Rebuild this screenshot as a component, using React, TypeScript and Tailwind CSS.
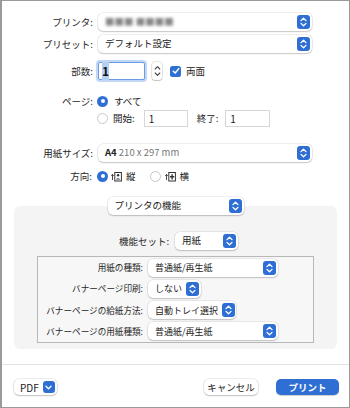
import React from "react"

const FONT = { fontFamily: '"Noto Sans CJK JP", "Noto Sans", sans-serif' }

function Stepper() {
  return (
    <span className="flex h-[14px] w-[13px] shrink-0 items-center justify-center rounded-[3px] bg-[#2f6fd4]">
      <svg width="7" height="10" viewBox="0 0 7 10" fill="none" stroke="white" strokeWidth="1.3" strokeLinecap="round" strokeLinejoin="round">
        <path d="M1 3.6 L3.5 1.2 L6 3.6" />
        <path d="M1 6.4 L3.5 8.8 L6 6.4" />
      </svg>
    </span>
  )
}

function Popup({ children, className = "", text = "text-[9.5px]" }: { children: React.ReactNode; className?: string; text?: string }) {
  return (
    <div
      className={`flex h-[18px] items-center justify-between gap-[4px] rounded-[5px] bg-white pl-[7px] pr-[2px] text-[#222] shadow-[0_0_0_0.5px_rgba(0,0,0,0.12),0_1px_1.5px_rgba(0,0,0,0.18)] ${text} ${className}`}
    >
      <span className="whitespace-nowrap leading-none">{children}</span>
      <Stepper />
    </div>
  )
}

function Radio({ on }: { on?: boolean }) {
  return on ? (
    <span className="flex h-[11px] w-[11px] shrink-0 items-center justify-center rounded-full bg-[#2f6fd4]">
      <span className="h-[4px] w-[4px] rounded-full bg-white" />
    </span>
  ) : (
    <span className="h-[11px] w-[11px] shrink-0 rounded-full border border-[#c8c8c8] bg-white" />
  )
}

function Field({ value, className = "" }: { value: string; className?: string }) {
  return (
    <div className={`flex h-[17px] items-center border border-[#d6d6d6] bg-white px-[4px] text-[10px] text-[#222] ${className}`}>
      {value}
    </div>
  )
}

function OrientIcon({ land }: { land?: boolean }) {
  return (
    <svg width="11" height="11" viewBox="0 0 11 11" fill="none" stroke="#333" strokeWidth="1">
      <path d="M1.5 9 V3.5 M0.3 4.8 L1.5 3.3 L2.7 4.8" strokeWidth="0.9" />
      <rect x="3.8" y="1.5" width="6.6" height="8.5" />
      {land ? (
        <path d="M5 5.8 H9.2 M7.1 3.2 V8.4" strokeWidth="1.4" />
      ) : (
        <>
          <circle cx="7.1" cy="4.3" r="1.2" fill="#333" stroke="none" />
          <path d="M5 8.6 Q7.1 5.8 9.2 8.6 Z" fill="#333" stroke="none" />
        </>
      )}
    </svg>
  )
}

function Label({ children }: { children: React.ReactNode }) {
  return <div className="w-[91px] shrink-0 whitespace-nowrap text-right text-[9.5px] text-[#262626]">{children}</div>
}

function InnerRow({ label, value, w }: { label: string; value: string; w: string }) {
  return (
    <div className="flex h-[22px] items-center">
      <div className="w-[105px] shrink-0 whitespace-nowrap text-right text-[8.6px] text-[#262626]">{label}</div>
      <Popup className={`ml-[5px] ${w}`} text="text-[9px]">{value}</Popup>
    </div>
  )
}

export default function App() {
  return (
    <div
      style={FONT}
      className="flex h-[408px] w-[350px] flex-col border-t border-r border-b border-l-2 border-[#9a9a9a] bg-white"
    >
      {/* top form */}
      <div className="flex flex-col pt-[12px]">
        <div className="flex h-[18px] items-center gap-[5px]">
          <Label>プリンタ:</Label>
          <Popup className="w-[214px]">
            <span className="text-[#888] blur-[1.6px]">■■■ ■■■■</span>
          </Popup>
        </div>
        <div className="mt-[4px] flex h-[18px] items-center gap-[5px]">
          <Label>プリセット:</Label>
          <Popup className="w-[214px]">デフォルト設定</Popup>
        </div>
        <div className="mt-[9px] flex h-[18px] items-center gap-[5px]">
          <Label>部数:</Label>
          <div className="flex h-[18px] w-[47px] items-center rounded-[2px] border border-[#6b9be0] bg-white px-[3px] text-[12px] font-semibold text-[#111] shadow-[0_0_0_2px_rgba(80,140,230,0.35)]">
            <span className="bg-[#b5d0f5]">1</span>
          </div>
          <div className="ml-[2px] flex h-[18px] w-[10px] flex-col items-center justify-center rounded-[3px] bg-white shadow-[0_0_0_0.5px_rgba(0,0,0,0.2),0_1px_1px_rgba(0,0,0,0.15)]">
            <svg width="7" height="12" viewBox="0 0 7 12" fill="none" stroke="#444" strokeWidth="1.1" strokeLinecap="round" strokeLinejoin="round">
              <path d="M1.2 4 L3.5 1.7 L5.8 4" />
              <path d="M1.2 8 L3.5 10.3 L5.8 8" />
            </svg>
          </div>
          <span className="ml-[3px] flex h-[11px] w-[11px] items-center justify-center rounded-[2.5px] bg-[#2f6fd4]">
            <svg width="8" height="8" viewBox="0 0 8 8" fill="none" stroke="white" strokeWidth="1.5" strokeLinecap="round" strokeLinejoin="round">
              <path d="M1.3 4.2 L3.2 6 L6.8 1.6" />
            </svg>
          </span>
          <span className="text-[9.5px] text-[#222]">両面</span>
        </div>

        <div className="mt-[13px] flex h-[16px] items-center gap-[4px]">
          <Label>ページ:</Label>
          <Radio on />
          <span className="ml-[2px] text-[9.5px] text-[#222]">すべて</span>
        </div>
        <div className="mt-[1px] flex h-[17px] items-center">
          <div className="w-[95px] shrink-0" />
          <Radio />
          <span className="ml-[5px] text-[9.5px] text-[#222]">開始:</span>
          <Field value="1" className="ml-[9px] w-[44px]" />
          <span className="ml-[9px] text-[9.5px] text-[#222]">終了:</span>
          <Field value="1" className="ml-[7px] w-[45px]" />
        </div>

        <div className="mt-[17px] flex h-[18px] items-center gap-[5px]">
          <Label>用紙サイズ:</Label>
          <Popup className="w-[214px]">
            <span className="font-semibold text-[#222]">A4</span>
            <span className="text-[#777]"> 210 x 297 mm</span>
          </Popup>
        </div>
        <div className="mt-[6px] flex h-[16px] items-center">
          <div className="w-[95px] shrink-0 pr-[5px] text-right text-[9.5px] text-[#262626]">方向:</div>
          <Radio on />
          <span className="ml-[3px] flex"><OrientIcon /></span>
          <span className="ml-[4px] text-[9.5px] text-[#222]">縦</span>
          <span className="ml-[14px] flex"><Radio /></span>
          <span className="ml-[4px] flex"><OrientIcon land /></span>
          <span className="ml-[4px] text-[9.5px] text-[#222]">横</span>
        </div>
      </div>

      {/* printer features */}
      <div className="mt-[13px] flex justify-center">
        <Popup className="relative z-10 w-[136px]">プリンタの機能</Popup>
      </div>
      <div className="mx-[12px] -mt-[9px] flex h-[143px] flex-col rounded-[6px] bg-[#f4f4f4] pt-[26px]">
        <div className="flex h-[18px] items-center justify-center gap-[6px] pl-[6px]">
          <span className="text-[9.5px] text-[#262626]">機能セット:</span>
          <Popup className="w-[63px]">用紙</Popup>
        </div>
        <div className="mx-[23px] mt-[6px] flex h-[87px] flex-col justify-center border border-[#b8b8b8] bg-[#f7f7f7]">
          <InnerRow label="用紙の種類:" value="普通紙/再生紙" w="w-[130px]" />
          <InnerRow label="バナーページ印刷:" value="しない" w="w-[53px]" />
          <InnerRow label="バナーページの給紙方法:" value="自動トレイ選択" w="w-[88px]" />
          <InnerRow label="バナーページの用紙種類:" value="普通紙/再生紙" w="w-[130px]" />
        </div>
      </div>

      {/* footer */}
      <div className="mt-[15px] h-px bg-[#e2e2e2]" />
      <div className="flex flex-1 items-center justify-between pl-[12px] pr-[10px] pt-[2px]">
        <div className="flex h-[16px] items-center gap-[4px] rounded-[5px] bg-white pl-[6px] pr-[2px] text-[10px] text-[#222] shadow-[0_0_0_0.5px_rgba(0,0,0,0.15),0_1px_1.5px_rgba(0,0,0,0.18)]">
          <span>PDF</span>
          <span className="flex h-[12px] w-[12px] items-center justify-center rounded-[3px] bg-[#2f6fd4]">
            <svg width="7" height="5" viewBox="0 0 7 5" fill="none" stroke="white" strokeWidth="1.3" strokeLinecap="round" strokeLinejoin="round">
              <path d="M1 1.3 L3.5 3.7 L6 1.3" />
            </svg>
          </span>
        </div>
        <div className="flex items-center gap-[18px]">
          <button className="flex h-[16px] w-[54px] items-center justify-center rounded-[5px] bg-white text-[9.5px] text-[#222] shadow-[0_0_0_0.5px_rgba(0,0,0,0.15),0_1px_1.5px_rgba(0,0,0,0.18)]">
            キャンセル
          </button>
          <button className="flex h-[16px] w-[63px] items-center justify-center rounded-[5px] bg-[#2f6fd4] text-[9.5px] font-semibold text-white shadow-[0_1px_1px_rgba(0,0,0,0.2)]">
            プリント
          </button>
        </div>
      </div>
    </div>
  )
}
